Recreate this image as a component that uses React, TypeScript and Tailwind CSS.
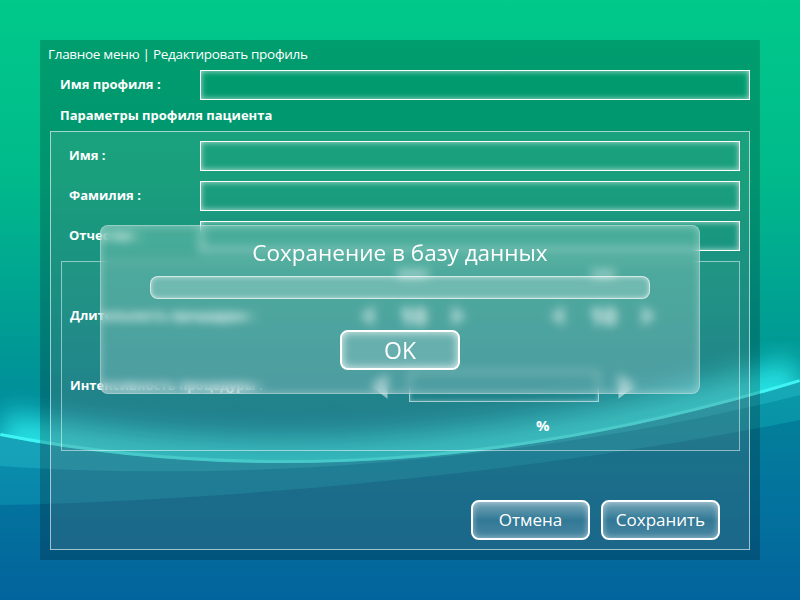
import React from "react";

const font = { fontFamily: '"Open Sans", "Noto Sans", sans-serif' };

const Wallpaper = () => (
  <svg
    className="absolute inset-0"
    width="800"
    height="600"
    viewBox="0 0 800 600"
    aria-hidden
  >
    <defs>
      <linearGradient id="bg" x1="0" y1="0" x2="0" y2="1">
        <stop offset="0" stopColor="#00c98a" />
        <stop offset="0.3" stopColor="#00b98b" />
        <stop offset="0.55" stopColor="#009c94" />
        <stop offset="0.78" stopColor="#0080a0" />
        <stop offset="1" stopColor="#0066a0" />
      </linearGradient>
      <clipPath id="above">
        <path d="M0,0 L800,0 L800,382 Q380,510 0,436 Z" />
      </clipPath>
      <filter id="soft" x="-10%" y="-50%" width="120%" height="200%">
        <feGaussianBlur stdDeviation="14" />
      </filter>
    </defs>
    <rect width="800" height="600" fill="url(#bg)" />
    <path
      d="M0,505 C250,500 550,470 800,420 L800,600 L0,600 Z"
      fill="#0a5f95"
      opacity="0.25"
    />
    <path
      d="M0,436 Q380,510 800,382 L800,420 C550,470 250,500 0,505 Z"
      fill="#2bb4d0"
      opacity="0.22"
    />
    <path
      d="M0,436 Q380,510 800,382 L800,395 C500,470 200,480 0,466 Z"
      fill="#35d0dc"
      opacity="0.3"
    />
    <g clipPath="url(#above)">
      <path
        d="M0,436 Q380,510 800,382"
        stroke="#2ff0f0"
        strokeWidth="50"
        fill="none"
        filter="url(#soft)"
        opacity="0.85"
      />
      <path
        d="M0,436 Q380,510 800,382"
        stroke="#40f4f4"
        strokeWidth="6"
        fill="none"
      />
    </g>
  </svg>
);

const Field = () => (
  <div className="flex-1 h-[30px] border border-white shadow-[inset_0_0_6px_rgba(255,255,255,0.7)]" />
);

const Arrow = ({ dir, cls }: { dir: "l" | "r"; cls: string }) => (
  <svg className={cls} viewBox="0 0 20 30" aria-hidden>
    <path
      d={dir === "l" ? "M2,15 L18,3 L18,27 Z" : "M18,15 L2,3 L2,27 Z"}
      fill="rgba(255,255,255,0.5)"
    />
  </svg>
);

const Spinner = ({ unit }: { unit: string }) => (
  <div className="flex flex-col items-center">
    <span className="h-[32px] text-[14px] leading-[18px] font-bold text-white/80">
      {unit}
    </span>
    <div className="flex items-center gap-[18px] h-[40px]">
      <Arrow dir="l" cls="w-[18px] h-[26px]" />
      <span className="text-[24px] font-bold text-white/90 w-[38px] text-center">
        10
      </span>
      <Arrow dir="r" cls="w-[18px] h-[26px]" />
    </div>
  </div>
);

const GlassButton = ({ children }: { children: React.ReactNode }) => (
  <button className="w-[119px] h-[40px] rounded-[8px] border-2 border-white bg-gradient-to-b from-white/40 via-white/10 to-white/20 shadow-[inset_0_0_6px_rgba(255,255,255,0.5)] text-white text-[17px] flex items-center justify-center">
    {children}
  </button>
);

export default function App() {
  return (
    <div
      className="relative w-[800px] h-[600px] overflow-hidden text-white"
      style={font}
    >
      <Wallpaper />
      <div className="relative pl-[40px] pt-[40px]">
        <div className="w-[720px] h-[520px] bg-black/20 px-[10px] pb-[10px] flex flex-col">
          <div className="h-[30px] -ml-[2px] text-[13.5px] leading-[28px] tracking-[-0.3px]">
            Главное меню | Редактировать профиль
          </div>
          <div className="flex items-center">
            <span className="w-[150px] pl-[10px] text-[13px] font-bold">
              Имя профиля :
            </span>
            <Field />
          </div>
          <div className="h-[31px] pl-[10px] text-[13px] font-bold flex items-center">
            Параметры профиля пациента
          </div>
          <div className="flex-1 border border-white/60 bg-white/10 pl-[10px] pr-[9px] pt-[9px] pb-[9px] flex flex-col">
            <div className="flex flex-col gap-[10px]">
              {["Имя :", "Фамилия :", "Отчество :"].map((l) => (
                <div key={l} className="flex items-center">
                  <span className="w-[139px] pl-[8px] text-[13px] font-bold">
                    {l}
                  </span>
                  <Field />
                </div>
              ))}
            </div>
            <div className="mt-[10px] h-[190px] border border-white/50 bg-white/[0.03] flex flex-col">
              <div className="flex items-end pt-[2px]">
                <span className="w-[296px] h-[40px] pl-[8px] flex items-center text-[13px] font-bold">
                  Длительность процедуры :
                </span>
                <Spinner unit="мин" />
                <div className="w-[80px]" />
                <Spinner unit="сек" />
              </div>
              <div className="flex items-center mt-[34px]">
                <span className="w-[305px] pl-[8px] text-[13px] font-bold">
                  Интенсивность процедуры :
                </span>
                <Arrow dir="l" cls="w-[24px] h-[32px]" />
                <div className="ml-[18px] w-[190px] h-[31px] border border-white/60 shadow-[inset_0_0_4px_rgba(255,255,255,0.4)]" />
                <Arrow dir="r" cls="ml-[16px] w-[24px] h-[32px]" />
              </div>
              <div className="pl-[474px] mt-[12px] text-[15px] font-bold">%</div>
            </div>
            <div className="mt-auto flex justify-end gap-[11px] pr-[20px]">
              <GlassButton>Отмена</GlassButton>
              <GlassButton>Сохранить</GlassButton>
            </div>
          </div>
        </div>
      </div>

      <div className="absolute left-[100px] top-[225px] w-[600px] h-[169px] rounded-[8px] border border-white/40 bg-white/20 backdrop-blur-[5px] shadow-[inset_0_0_8px_rgba(255,255,255,0.35)] flex flex-col items-center">
        <div className="mt-[11px] h-[32px] text-[22.5px] leading-[32px]">
          Сохранение в базу данных
        </div>
        <div className="mt-[7px] w-[500px] h-[23px] rounded-[8px] border border-white/70 bg-white/20 shadow-[inset_0_0_5px_rgba(255,255,255,0.6)]" />
        <button className="mt-[31px] w-[120px] h-[40px] rounded-[8px] border-2 border-white bg-white/15 shadow-[inset_0_0_10px_rgba(255,255,255,0.85)] text-[23px] text-white flex items-center justify-center">
          OK
        </button>
      </div>
    </div>
  );
}
